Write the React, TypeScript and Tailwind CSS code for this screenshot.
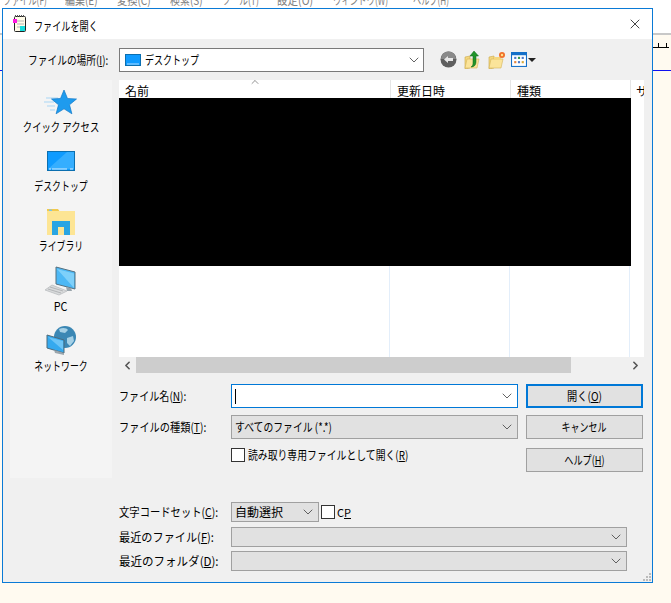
import { ChevronDown, ChevronUp, ChevronLeft, ChevronRight, X } from "lucide-react";

const font = { fontFamily: '"Noto Sans CJK JP", "Noto Sans", sans-serif' };

const menus = [
  ["ファイル(F)", "w-[62px]", "scale-x-[0.7]"],
  ["編集(E)", "w-[52px]", "scale-x-[0.83]"],
  ["変換(C)", "w-[53px]", "scale-x-[0.85]"],
  ["検索(S)", "w-[52px]", "scale-x-[0.83]"],
  ["ツール(T)", "w-[55px]", "scale-x-[0.72]"],
  ["設定(O)", "w-[56px]", "scale-x-[0.88]"],
  ["ウィンドウ(W)", "w-[80px]", "scale-x-[0.7]"],
  ["ヘルプ(H)", "w-[60px]", "scale-x-[0.68]"],
];

const U = ({ children }: { children: string }) => <span className="underline">{children}</span>;

const StarIcon = () => (
  <svg width="34" height="26" viewBox="0 0 34 26">
    <path d="M2 8h12M0 12h10M3 16h8M6 20h5" stroke="#a9d6f5" strokeWidth="1" />
    <path d="M20 0l3.5 8.500 9 .5-7 5.800 2.400 9-7.900-5-7.900 5 2.400-9-7-5.800 9-.5z" fill="#1e9bee" stroke="#0f78c8" strokeWidth="0.7" />
  </svg>
);

const DesktopIcon = () => (
  <svg width="28" height="20" viewBox="0 0 28 20">
    <rect x="0.500" y="0.500" width="27" height="19" fill="#0f9bff" stroke="#0b6fb0" />
    <path d="M1 18L20 1h7v17z" fill="#35aeff" />
    <path d="M2 18h2M5 18h15M23 18h3" stroke="#d8efff" strokeWidth="1" />
  </svg>
);

const LibraryIcon = () => (
  <svg width="28" height="27" viewBox="0 0 28 27">
    <path d="M0 1h11l2 3h-13z" fill="#f2c94c" />
    <rect x="0" y="3" width="28" height="24" fill="#fde594" />
    <rect x="2" y="1.500" width="3" height="1.500" fill="#7cc6e8" />
    <rect x="5" y="13" width="18" height="14" fill="#29a5e3" />
    <rect x="11" y="19" width="6" height="8" fill="#fde594" />
  </svg>
);

const PcIcon = () => (
  <svg width="32" height="30" viewBox="0 0 32 30">
    <path d="M11 1l19 5v17l-19-5z" fill="#4db8f5" stroke="#55707f" strokeWidth="1" />
    <path d="M12 3l17 4.500v14.500z" fill="#7ed0fa" />
    <path d="M21 21l1 4h5l-1-3z" fill="#9aa5ac" />
    <path d="M7 19L0 24l14 5 8-4z" fill="#d8dadb" stroke="#b5b8ba" strokeWidth="0.7" />
    <path d="M5 21l13 4M3 23l13 4" stroke="#a8abad" strokeWidth="0.8" />
  </svg>
);

const NetworkIcon = () => (
  <svg width="30" height="30" viewBox="0 0 30 30">
    <circle cx="19" cy="11" r="11" fill="#3b87b4" />
    <path d="M13 3c4-2 8-1 9 1l-3 3-5-1zM21 12l6-2 1 5-4 5-3-3z" fill="#a5d0e6" />
    <path d="M1 9l17 5v13l-17-5z" fill="#35a9ee" stroke="#4d6a7a" strokeWidth="1" />
    <path d="M2 11l15 4v9z" fill="#6cc4f6" />
    <path d="M8 24l1 3 9 2v-2z" fill="#9aa5ac" />
  </svg>
);

const AppIcon = () => (
  <svg width="16" height="18" viewBox="0 0 16 18">
    <rect x="2.500" y="1.500" width="11" height="15" rx="1" fill="#fffbe8" stroke="#222" />
    <path d="M3 1h10" stroke="#555" strokeWidth="2" strokeDasharray="1 1" />
    <path d="M5 6h7M5 9h7M5 12h4" stroke="#b5b5b5" />
    <rect x="1" y="4" width="4" height="4" fill="#ff18e0" />
    <rect x="8" y="11" width="5" height="5" fill="#17dcdc" />
  </svg>
);

const BackIcon = () => (
  <svg width="17" height="17" viewBox="0 0 17 17">
    <circle cx="8.500" cy="8.500" r="8" fill="#5f5f5f" />
    <path d="M1 8a7.500 7.500 0 0 1 15 0z" fill="#8a8a8a" />
    <path d="M4 8.500l4-3.500v2h5v3H8v2z" fill="#e8e8e8" />
  </svg>
);

const FolderIcon = ({ up }: { up?: boolean }) => (
  <svg width="18" height="18" viewBox="0 0 18 18">
    <path d="M1 6l5-1v12l-5 1z" fill="#f4d77e" stroke="#c9a84c" strokeWidth="0.600" />
    <path d="M3 8h12l-2 9H1z" fill="#fbe49a" stroke="#d3b358" strokeWidth="0.600" />
    {up ? (
      <path d="M10 0l4.500 5H12v6c0 3-2 5-5 5 2-1 2-3 2-5V5H6z" fill="#21942a" stroke="#0f6b18" strokeWidth="0.500" />
    ) : (
      <g>
        <path d="M6 6h7v3H6z" fill="#f4d77e" />
        <circle cx="14" cy="4" r="3" fill="#f0702a" />
        <circle cx="14" cy="4" r="1.200" fill="#ffe08a" />
      </g>
    )}
  </svg>
);

const ViewIcon = () => (
  <svg width="16" height="15" viewBox="0 0 15 14">
    <rect x="0.500" y="0.500" width="14" height="13" fill="#fff" stroke="#1670c8" />
    <rect x="0" y="0" width="15" height="3" fill="#1670c8" />
    <rect x="3" y="4.500" width="2" height="2" fill="#4c78c8" />
    <rect x="6.500" y="4.500" width="2" height="2" fill="#3a9a4a" />
    <rect x="10" y="4.500" width="2" height="2" fill="#4c78c8" />
    <rect x="3" y="8.500" width="2" height="2" fill="#e8823a" />
    <rect x="6.500" y="8.500" width="2" height="2" fill="#4c78c8" />
    <rect x="10" y="8.500" width="2" height="2" fill="#d9a93a" />
  </svg>
);

const Place = ({ icon, label, h, fit, gap }: { icon: React.ReactNode; label: string; h: string; fit: string; gap: string }) => (
  <div className={`flex flex-col items-center justify-end ${h}`}>
    {icon}
    <span className={`text-[12px] leading-[16px] whitespace-nowrap text-black ${gap} ${fit}`}>{label}</span>
  </div>
);

const Combo = ({ w, h, text, fit }: { w: string; h: string; text?: string; fit?: string }) => (
  <div className={`flex items-center justify-between border border-[#a0a0a0] bg-[#e1e1e1] pl-[3px] pr-[2px] text-[12px] text-black ${w} ${h}`}>
    <span className={`origin-left whitespace-nowrap ${fit ?? ""}`}>{text}</span>
    <ChevronDown size={16} strokeWidth={1.25} className="text-[#444]" />
  </div>
);

const Btn = ({ children, h, focus, fit }: { children: React.ReactNode; h: string; focus?: boolean; fit: string }) => (
  <div className={`flex w-[117px] items-center justify-center bg-[#e1e1e1] text-[12px] text-black ${h} ${focus ? "border-2 border-[#0078d7]" : "border border-[#a0a0a0]"}`}>
    <span className={`whitespace-nowrap ${fit}`}>{children}</span>
  </div>
);

const Box = () => <div className="h-[14px] w-[14px] shrink-0 border border-[#333] bg-white"></div>;

const Label = ({ children, fit }: { children: React.ReactNode; fit: string }) => (
  <div className="w-[112px] shrink-0 text-[12px] text-black">
    <span className={`block origin-left whitespace-nowrap ${fit}`}>{children}</span>
  </div>
);

export default function App() {
  return (
    <div className="relative h-[603px] w-[671px] overflow-hidden bg-[#fffaf0]" style={font}>
      {/* editor behind the dialog */}
      <div className="h-[33px] bg-white">
        <div className="flex h-[7px] items-end overflow-hidden pl-[3px] text-[12px] leading-[14px] text-[#808080]">
          {menus.map(([m, w, fit]) => (
            <span key={m} className={`shrink-0 ${w}`}>
              <span className={`block origin-left whitespace-nowrap ${fit}`}>{m}</span>
            </span>
          ))}
        </div>
      </div>
      <div className="flex h-[15px] items-end justify-end border-t-2 border-[#c8c8c8] pr-[2px]">
        <div className="flex h-[5px] w-[17px] border-b border-black">
          <div className="w-[7px] border-r border-black"></div>
          <div className="w-[8px] border-r border-black"></div>
        </div>
      </div>
      <div className="mt-[22px] h-px bg-[#1010f0]"></div>

      {/* dialog window */}
      <div className="absolute left-[2px] top-[8px] flex h-[575px] w-[651px] flex-col border border-[#0a7ad6] bg-[#f0f0f0]">
        <div className="flex h-[30px] shrink-0 items-center justify-between bg-white pl-[9px] pr-[9px]">
          <div className="flex items-center gap-[6px] text-[12px] text-black">
            <AppIcon />
            <span className="mt-[3px] origin-left scale-x-[0.76] whitespace-nowrap">ファイルを開く</span>
          </div>
          <X size={16} strokeWidth={1.1} className="text-black" />
        </div>

        <div className="flex h-[41px] shrink-0 items-center">
          <div className="w-[116px] shrink-0 pl-[25px] text-[12px] text-black">
            <span className="block origin-left scale-x-[0.81] whitespace-nowrap">ファイルの場所(<U>I</U>):</span>
          </div>
          <div className="flex h-[24px] w-[305px] items-center justify-between border border-[#7a7a7a] bg-white pl-[5px] pr-[1px] text-[12px] text-black">
            <div className="flex items-center gap-[4px]">
              <svg width="16" height="12" viewBox="0 0 16 12">
                <rect x="0.500" y="0.500" width="15" height="11" fill="#0f9bff" stroke="#0b6fb0" />
                <path d="M2 10h12" stroke="#d8efff" strokeWidth="0.800" />
              </svg>
              <span className="origin-left scale-x-[0.75] whitespace-nowrap">デスクトップ</span>
            </div>
            <ChevronDown size={16} strokeWidth={1.25} className="text-[#444]" />
          </div>
          <div className="ml-[16px] flex items-center">
            <BackIcon />
            <div className="ml-[7px]"><FolderIcon up /></div>
            <div className="ml-[6px]"><FolderIcon /></div>
            <div className="ml-[5px]"><ViewIcon /></div>
            <div className="ml-[1px] h-0 w-0 border-x-[4px] border-t-[4px] border-x-transparent border-t-[#222]"></div>
          </div>
        </div>

        <div className="flex flex-1 pl-[7px]">
          {/* places bar */}
          <div className="h-[398px] w-[102px] shrink-0 bg-[#f4f4f4]">
            <Place icon={<StarIcon />} label="クイック アクセス" h="h-[55px]" gap="mt-[3px]" fit="scale-x-[0.78]" />
            <Place icon={<DesktopIcon />} label="デスクトップ" h="h-[59px]" gap="mt-[7px]" fit="scale-x-[0.74]" />
            <Place icon={<LibraryIcon />} label="ライブラリ" h="h-[60px]" gap="mt-[3px]" fit="scale-x-[0.74]" />
            <Place icon={<PcIcon />} label="PC" h="h-[60px]" gap="mt-[2px]" fit="scale-x-[0.9]" />
            <Place icon={<NetworkIcon />} label="ネットワーク" h="h-[60px]" gap="mt-[2px]" fit="scale-x-[0.74]" />
          </div>

          <div className="ml-[7px] flex w-[525px] flex-col">
            {/* file list */}
            <div className="h-[277px] w-[525px] bg-white">
              <div className="relative flex h-[18px] text-[12px] leading-[22px] text-black">
                <ChevronUp size={12} strokeWidth={1.25} className="absolute left-[130px] top-[-4px] text-[#555]" />
                <div className="w-[271px] shrink-0 pl-[6px]">名前</div>
                <div className="w-[120px] shrink-0 border-l border-[#e5e5e5] pl-[6px]">更新日時</div>
                <div className="w-[120px] shrink-0 border-l border-[#e5e5e5] pl-[6px]">種類</div>
                <div className="w-[14px] shrink-0 overflow-hidden whitespace-nowrap border-l border-[#e5e5e5] pl-[5px]">サ</div>
              </div>
              <div className="h-[168px] w-[512px] bg-black"></div>
              <div className="flex h-[91px]">
                <div className="w-[271px] border-r border-[#e3eefa]"></div>
                <div className="w-[120px] border-r border-[#e3eefa]"></div>
                <div className="w-[120px] border-r border-[#e3eefa]"></div>
              </div>
            </div>
            <div className="flex h-[16px] w-[525px] items-center bg-[#f0f0f0]">
              <ChevronLeft size={13} strokeWidth={3} className="w-[17px] text-[#555]" />
              <div className="h-[16px] w-[435px] bg-[#cdcdcd]"></div>
              <div className="flex-1"></div>
              <ChevronRight size={13} strokeWidth={3} className="w-[17px] text-[#555]" />
            </div>

            {/* file name and type */}
            <div className="mt-[11px] flex items-center">
              <Label fit="scale-x-[0.84]">ファイル名(<U>N</U>):</Label>
              <div className="flex h-[24px] w-[287px] items-center justify-between border border-[#0078d7] bg-white pl-[3px] pr-[2px]">
                <div className="h-[15px] w-px bg-black"></div>
                <ChevronDown size={16} strokeWidth={1.25} className="text-[#444]" />
              </div>
              <div className="ml-[8px]"><Btn h="h-[24px]" focus fit="scale-x-[0.85]">開く(<U>O</U>)</Btn></div>
            </div>
            <div className="mt-[7px] flex items-center">
              <Label fit="scale-x-[0.85]">ファイルの種類(<U>T</U>):</Label>
              <Combo w="w-[287px]" h="h-[24px]" text="すべてのファイル (*.*)" fit="scale-x-[0.82]" />
              <div className="ml-[8px]"><Btn h="h-[24px]" fit="scale-x-[0.75]">キャンセル</Btn></div>
            </div>
            <div className="mt-[9px] flex items-start">
              <div className="flex w-[407px] items-center gap-[3px] pl-[112px] text-[12px] leading-[14px] text-black">
                <Box />
                <span className="origin-left scale-x-[0.82] whitespace-nowrap">読み取り専用ファイルとして開く(<U>R</U>)</span>
              </div>
              <Btn h="h-[24px]" fit="scale-x-[0.76]">ヘルプ(<U>H</U>)</Btn>
            </div>

            {/* encoding and history */}
            <div className="mt-[30px] flex items-center">
              <Label fit="scale-x-[0.86]">文字コードセット(<U>C</U>):</Label>
              <Combo w="w-[88px]" h="h-[20px]" text="自動選択" />
              <div className="ml-[2px] flex items-center gap-[2px] text-[11px] text-black">
                <Box />
                <span>C<U>P</U></span>
              </div>
            </div>
            <div className="mt-[5px] flex items-center">
              <Label fit="scale-x-[0.93]">最近のファイル(<U>F</U>):</Label>
              <Combo w="w-[396px]" h="h-[20px]" />
            </div>
            <div className="mt-[4px] flex items-center">
              <Label fit="scale-x-[0.96]">最近のフォルダ(<U>D</U>):</Label>
              <Combo w="w-[396px]" h="h-[20px]" />
            </div>
          </div>
        </div>

        {/* size grip */}
        <div className="absolute bottom-[1px] right-[1px] grid grid-cols-3 gap-[1px]">
          <span></span><span></span><span className="h-[2px] w-[2px] bg-[#bbb]"></span>
          <span></span><span className="h-[2px] w-[2px] bg-[#bbb]"></span><span className="h-[2px] w-[2px] bg-[#bbb]"></span>
          <span className="h-[2px] w-[2px] bg-[#bbb]"></span><span className="h-[2px] w-[2px] bg-[#bbb]"></span><span className="h-[2px] w-[2px] bg-[#bbb]"></span>
        </div>
      </div>
    </div>
  );
}
